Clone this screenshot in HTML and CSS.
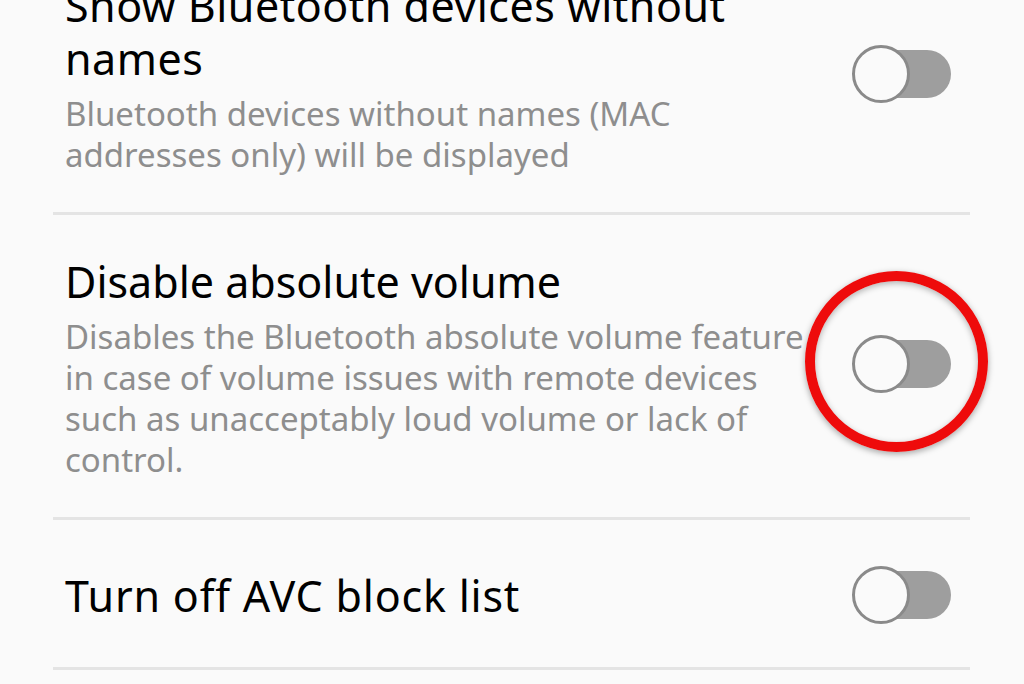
FILE: index.html
```html
<!DOCTYPE html>
<html lang="en">
<head>
  <meta charset="UTF-8">
  <meta name="viewport" content="width=device-width, initial-scale=1.0">
  <title>Developer options</title>
  <link rel="stylesheet" href="styles.css">
</head>
<body>
  <ul class="pref-list">
    <li class="pref pref-first">
      <div class="pref-text">
        <h3 class="pref-title">Show Bluetooth devices without names</h3>
        <p class="pref-summary">Bluetooth devices without names (MAC addresses only) will be displayed</p>
      </div>
      <span class="switch"><span class="switch-track"></span><span class="switch-thumb"></span></span>
    </li>
    <li class="pref pref-marked">
      <div class="pref-text">
        <h3 class="pref-title">Disable absolute volume</h3>
        <p class="pref-summary">Disables the Bluetooth absolute volume feature in case of volume issues with remote devices such as unacceptably loud volume or lack of control.</p>
      </div>
      <span class="switch">
        <span class="switch-track"></span><span class="switch-thumb"></span>
        <span class="highlight-ring"></span>
      </span>
    </li>
    <li class="pref pref-last">
      <div class="pref-text">
        <h3 class="pref-title">Turn off AVC block list</h3>
      </div>
      <span class="switch"><span class="switch-track"></span><span class="switch-thumb"></span></span>
    </li>
  </ul>
</body>
</html>
```

FILE: styles.css
```css
html, body {
  margin: 0;
  height: 100%;
  overflow: hidden;
}
body {
  background: #fafafa;
  font-family: "Noto Sans", "Open Sans", sans-serif;
  color: #000;
}
.pref-list {
  list-style: none;
  margin: 0 54px 0 53px;
  padding: 0;
}
.pref {
  display: flex;
  align-items: center;
  gap: 36px;
  padding: 40px 19px 37px 12px;
  border-bottom: 3px solid #e4e4e4;
}
.pref-first {
  margin-top: -61px;
}
.pref-first .pref-title {
  letter-spacing: 0.5px;
}
.pref-last {
  padding-top: 46px;
  padding-bottom: 43px;
}
.pref-last .pref-title {
  letter-spacing: 0.8px;
}
.pref-text {
  flex: 1;
  min-width: 0;
}
.pref-title {
  margin: 0;
  font-size: 43px;
  font-weight: normal;
  line-height: 53px;
}
.pref-summary {
  margin: 8px 0 0;
  font-size: 33px;
  line-height: 41px;
  color: #8e8e8e;
}

/* 스위치 (꺼짐 상태) */
.switch {
  position: relative;
  flex: none;
  width: 99px;
  height: 58px;
  margin-bottom: 7px;
}
.pref-last .switch {
  margin-bottom: 0;
}
.switch-track {
  position: absolute;
  right: 0;
  top: 5px;
  width: 80px;
  height: 48px;
  border-radius: 24px;
  background: #9e9e9e;
}
.switch-thumb {
  position: absolute;
  left: 0;
  top: 0;
  width: 52px;
  height: 52px;
  border-radius: 50%;
  border: 3px solid #8a8a8a;
  background: #fafafa;
}
.highlight-ring {
  position: absolute;
  left: -47px;
  top: -64px;
  width: 163px;
  height: 161px;
  border-radius: 50%;
  border: 10px solid #ee0b0b;
  box-shadow: 0 2px 6px rgba(0, 0, 0, 0.35), inset 0 2px 6px rgba(0, 0, 0, 0.3);
}
```
